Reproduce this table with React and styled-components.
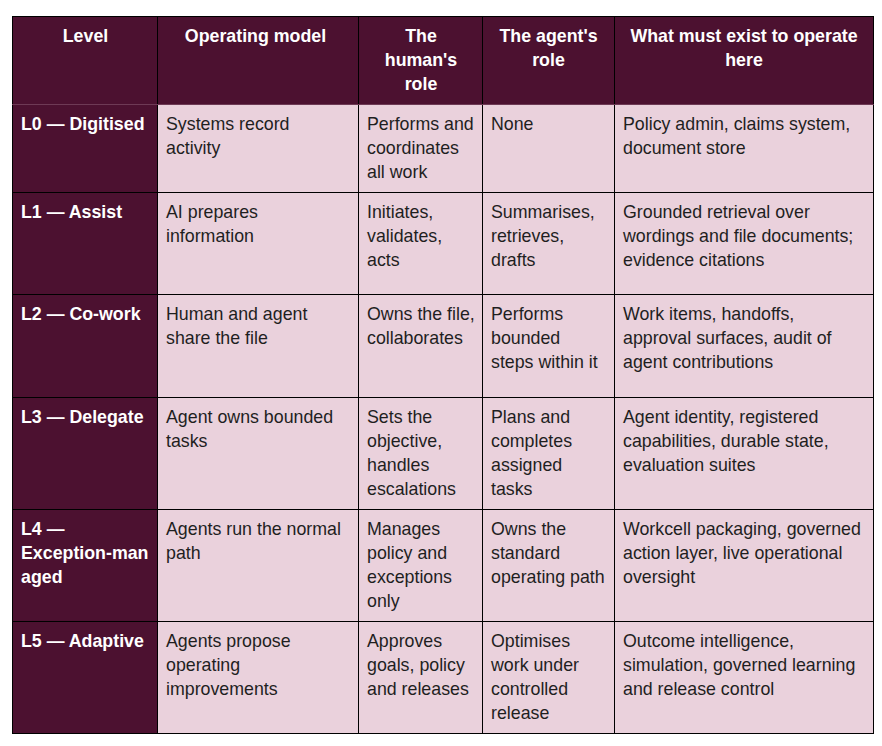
import React from "react";
import styled, { createGlobalStyle } from "styled-components";

const GlobalStyle = createGlobalStyle`
  html, body {
    margin: 0;
    padding: 0;
    background: #ffffff;
  }
  body {
    font-family: "Liberation Sans", Arial, sans-serif;
  }
`;

// width of each column and the right padding its cells use
const columns = [
  { width: 145, pr: 7, headPr: 7 },
  { width: 201, pr: 13, headPr: 13 },
  { width: 124, pr: 5, headPr: 7 },
  { width: 132, pr: 8, headPr: 8 },
  { width: 259, pr: 8, headPr: 8 },
];

const headers = [
  "Level",
  "Operating model",
  "The human's role",
  "The agent's role",
  "What must exist to operate here",
];

const rows = [
  {
    height: 88,
    level: "L0 — Digitised",
    cells: [
      "Systems record activity",
      "Performs and coordinates all work",
      "None",
      "Policy admin, claims system, document store",
    ],
  },
  {
    height: 102,
    level: "L1 — Assist",
    cells: [
      "AI prepares information",
      "Initiates, validates, acts",
      "Summarises, retrieves, drafts",
      "Grounded retrieval over wordings and file documents; evidence citations",
    ],
  },
  {
    height: 103,
    level: "L2 — Co-work",
    cells: [
      "Human and agent share the file",
      "Owns the file, collaborates",
      "Performs bounded steps within it",
      "Work items, handoffs, approval surfaces, audit of agent contributions",
    ],
  },
  {
    height: 112,
    level: "L3 — Delegate",
    cells: [
      "Agent owns bounded tasks",
      "Sets the objective, handles escalations",
      "Plans and completes assigned tasks",
      "Agent identity, registered capabilities, durable state, evaluation suites",
    ],
  },
  {
    height: 112,
    level: (
      <>
        L4 —<br />
        Exception-managed
      </>
    ),
    breakAll: true,
    cells: [
      "Agents run the normal path",
      "Manages policy and exceptions only",
      "Owns the standard operating path",
      "Workcell packaging, governed action layer, live operational oversight",
    ],
  },
  {
    height: 112,
    level: "L5 — Adaptive",
    cells: [
      "Agents propose operating improvements",
      "Approves goals, policy and releases",
      "Optimises work under controlled release",
      "Outcome intelligence, simulation, governed learning and release control",
    ],
  },
];

export default function App() {
  return (
    <Page>
      <GlobalStyle />
      <Table>
        <colgroup>
          {columns.map((c, i) => (
            <col key={i} style={{ width: c.width }} />
          ))}
        </colgroup>
        <thead>
          <tr>
            {headers.map((h, i) => (
              <HeadCell key={h} $pr={columns[i].headPr}>
                {h}
              </HeadCell>
            ))}
          </tr>
        </thead>
        <tbody>
          {rows.map((row, i) => (
            <Row key={i} $height={row.height}>
              <LevelCell $pr={columns[0].pr} $breakAll={row.breakAll}>
                {row.level}
              </LevelCell>
              {row.cells.map((c, j) => (
                <Cell key={j} $pr={columns[j + 1].pr}>
                  {c}
                </Cell>
              ))}
            </Row>
          ))}
        </tbody>
      </Table>
    </Page>
  );
}

const Page = styled.div`
  padding: 16px 0 0 12px;
`;

const Table = styled.table`
  border-collapse: collapse;
  table-layout: fixed;
  width: 861px;
  font-size: 17.8px;
  line-height: 24px;
`;

const HeadCell = styled.th`
  background-color: #4c1130;
  color: #ffffff;
  font-weight: bold;
  text-align: center;
  vertical-align: top;
  padding: 7px ${(p) => p.$pr}px 6px 8px;
  height: 88px;
  box-sizing: border-box;
  border: 1px solid #000000;
  border-bottom-color: #6e3a55;
`;

const Row = styled.tr`
  height: ${(p) => p.$height}px;
`;

const LevelCell = styled.td`
  background-color: #4c1130;
  color: #ffffff;
  font-weight: bold;
  vertical-align: top;
  padding: 7px ${(p) => p.$pr}px 6px 8px;
  border: 1px solid #000000;
  word-break: ${(p) => (p.$breakAll ? "break-all" : "normal")};
`;

const Cell = styled.td`
  background-color: #ead1dc;
  color: #1f1f1f;
  vertical-align: top;
  padding: 7px ${(p) => p.$pr}px 6px 8px;
  border: 1px solid #000000;
`;
